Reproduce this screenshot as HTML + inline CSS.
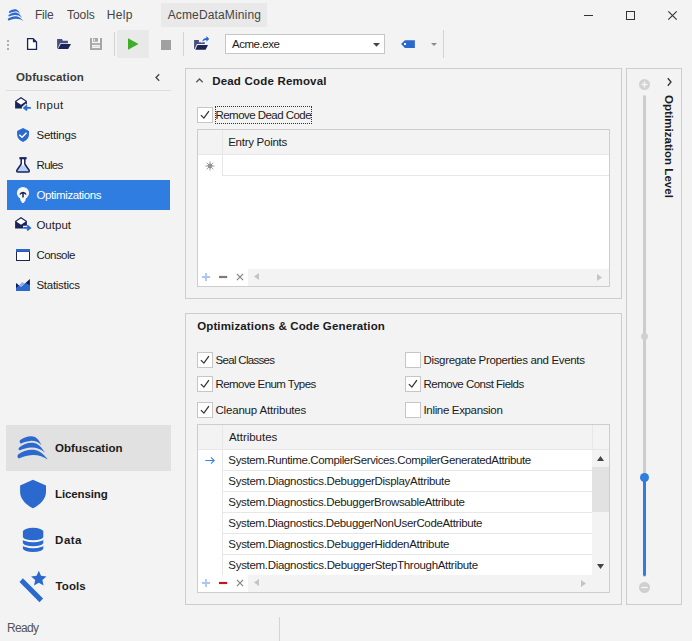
<!DOCTYPE html>
<html><head><meta charset="utf-8">
<style>
*{box-sizing:border-box;margin:0;padding:0}
html,body{width:692px;height:641px;overflow:hidden;background:#f3f3f3}
body{font-family:"Liberation Sans",sans-serif;font-size:11.5px;color:#1b1b1b;position:relative}
.a{position:absolute;white-space:nowrap;line-height:16px}
.b{font-weight:bold}
.box{position:absolute;border:1px solid #cdcdcd}
.cb{position:absolute;width:16px;height:16px;border:1px solid #c6c6c6;background:#fff}
svg{position:absolute;overflow:visible}
.row{position:absolute;left:223px;width:369px;height:20px;background:#fff}
.hl{position:absolute;height:1px;background:#e7e7e7}
.vl{position:absolute;width:1px;background:#e7e7e7}
</style></head><body>

<!-- MENU BAR -->
<div class="a" style="left:161px;top:3px;width:106px;height:24px;background:#e9e9e9"></div>
<!-- window controls -->
<div class="a" style="left:584px;top:15px;width:9px;height:1px;background:#333"></div>
<div class="a" style="left:626px;top:11px;width:9px;height:9px;border:1px solid #333"></div>
<svg style="left:668px;top:11px" width="9" height="9" viewBox="0 0 9 9"><path d="M0.3 0.3L8.7 8.7M8.7 0.3L0.3 8.7" stroke="#333" stroke-width="1.1" fill="none"/></svg>

<!-- TOOLBAR -->
<div class="a" style="left:117px;top:30px;width:32px;height:28px;background:#e9e9e9"></div>
<div class="a" style="left:114px;top:32px;width:1px;height:24px;background:#d4d4d4"></div>
<div class="a" style="left:183px;top:32px;width:1px;height:24px;background:#d4d4d4"></div>
<div class="a" style="left:443px;top:30px;width:1px;height:28px;background:#d4d4d4"></div>
<div class="a" style="left:225px;top:34px;width:160px;height:20px;background:#fff;border:1px solid #c6c6c6"></div>
<!-- grip -->
<div class="a" style="left:7px;top:40px;width:2px;height:2px;background:#adadad"></div>
<div class="a" style="left:7px;top:44px;width:2px;height:2px;background:#adadad"></div>
<div class="a" style="left:7px;top:48px;width:2px;height:2px;background:#adadad"></div>
<!-- stop -->
<div class="a" style="left:161px;top:40px;width:10px;height:10px;background:#a0a0a0"></div>
<!-- play -->
<svg style="left:128px;top:38px" width="11" height="12" viewBox="0 0 11 12"><path d="M0 0.3L10.5 6L0 11.7Z" fill="#3fae2a"/></svg>
<!-- combo arrow -->
<svg style="left:373px;top:43px" width="7" height="4" viewBox="0 0 7 4"><path d="M0 0H7L3.5 3.7Z" fill="#444"/></svg>
<svg style="left:431px;top:43px" width="6" height="3" viewBox="0 0 6 3"><path d="M0 0H6L3 3Z" fill="#8c8c8c"/></svg>

<svg style="left:5.1px;top:4.5px" width="21.63" height="19.57" viewBox="0 0 42 38" fill="#2b69cf"><path d="M8.2 12.1C13 8.6 19 7 23 9C26 10.5 28 14 29.4 17.3C26 13.4 22 12.5 18.2 12.9C14 13.3 11 14.5 9.3 15.4C7.6 15.8 7.2 13 8.2 12.1Z"/><path d="M7.2 19.5C12 15.5 18 13.8 23 15.2C27.5 16.5 30.5 20.5 32.8 24.6C29 21 24 19.5 19.4 19.6C15 19.8 11 21.2 8.1 22.3C6.4 22.6 6.2 20.2 7.2 19.5Z"/><path d="M6.1 26.4C11 22.8 18 20.8 24 22.2C29 23.5 33 27.5 35.8 31.6C31.5 28.3 26 26.7 20.6 26.9C15 27.2 10.5 29 7.5 30.2C5.4 30.6 5 27.5 6.1 26.4Z"/></svg>
<svg style="left:20px;top:32px" width="60" height="24" viewBox="0 0 60 24">
<path d="M7.6 6.6H13.1L16.5 9.9V17.4H7.6Z" fill="#fff" stroke="#1b2459" stroke-width="1.3"/><path d="M12.9 6.2V10.2H16.9Z" fill="#1b2459"/>
<path d="M37.1 6.9H42L42.8 8.7H47.9V11.2H40L37.6 16.5H37.1Z" fill="#474e7e"/>
<path d="M40.7 12.1H51L48.2 16.9H37.9Z" fill="#1b2459"/>
</svg>
<svg style="left:90px;top:38px" width="12" height="12" viewBox="0 0 12 12">
<rect x="0" y="0" width="12" height="12" fill="#a6a6a6"/><rect x="2" y="0" width="8" height="5.2" fill="#f5f5f5"/><rect x="3.2" y="0" width="4.7" height="3.7" fill="#a6a6a6"/><rect x="4.1" y="0.9" width="0.9" height="2.1" fill="#f5f5f5"/><rect x="2" y="6.9" width="8" height="3.2" fill="#f5f5f5"/><rect x="2" y="8.2" width="8" height="0.6" fill="#cfcfcf"/>
</svg>
<svg style="left:188px;top:32px" width="28" height="24" viewBox="0 0 28 24">
<path d="M6.1 8.1H10.9V10.3H16.8V12H9L6.6 17H6.1Z" fill="#474e7e"/>
<path d="M9.5 13H20L17.6 17.7H7.3Z" fill="#1b2459"/>
<path d="M14.2 9.7C14.5 7.2 16.2 6 18.4 5.9V4L21.2 6.9L18.4 9.8V7.9C16.8 7.9 15.6 8.5 14.2 9.7Z" fill="#2468d4" stroke="#f3f3f3" stroke-width="1.2" paint-order="stroke"/>
</svg>
<svg style="left:396px;top:34px" width="24" height="20" viewBox="0 0 24 20">
<path d="M5.1 10L8.9 6.2H18.9V13.9H8.9Z" fill="#2b69cf"/><rect x="8" y="9" width="2" height="2" fill="#f5f5f5"/>
</svg>


<!-- LEFT PANEL -->
<div class="a" style="left:6px;top:90px;width:165px;height:1px;background:#dedede"></div>
<svg style="left:155px;top:74px" width="5" height="7" viewBox="0 0 5 7"><path d="M4.2 0.3L1 3.5L4.2 6.7" stroke="#444" stroke-width="1.3" fill="none"/></svg>
<div class="a" style="left:7px;top:180px;width:163px;height:30px;background:#307de1"></div>

<svg style="left:10px;top:93px" width="26" height="24" viewBox="0 0 26 24"><path d="M5.1 8.1L11 3.9L16.9 8.1V15.6H5.1Z" fill="#1b2459"/><path d="M11 5.5L15.7 8.5L11 11.7L6.3 8.5Z" fill="#fff"/><path d="M21 14.9H14.2M17.2 12.2L14 14.9L17.2 17.6" stroke="#f3f3f3" stroke-width="4.4" fill="none" stroke-linejoin="round"/><path d="M20.8 14.9H14.6M17.1 12.4L14.2 14.9L17.1 17.4" stroke="#2468d4" stroke-width="1.9" fill="none"/></svg>
<svg style="left:10px;top:123px" width="26" height="24" viewBox="0 0 26 24">
<path d="M13 4.9L19 8.1V11.3C19 15 16.5 17.5 13 19C9.5 17.5 7.1 15 7.1 11.3V8.1Z" fill="#2b69cf"/>
<path d="M9.4 11.8L12 14.2L16.5 9.7" stroke="#fff" stroke-width="1.5" fill="none"/>
</svg>
<svg style="left:10px;top:153px" width="26" height="24" viewBox="0 0 26 24">
<path d="M11.2 6V11L6.9 17.2Q6.2 19 8 19H18Q19.8 19 19.1 17.2L14.8 11V6Z" fill="#b9cff5" stroke="#1b2459" stroke-width="1.5" stroke-linejoin="round"/>
<path d="M12 6H14V11.6L14.6 12.5H11.4L12 11.6Z" fill="#fff"/>
<path d="M9.4 5.2H16.6" stroke="#1b2459" stroke-width="2.2"/>
</svg>
<svg style="left:10px;top:183px" width="26" height="24" viewBox="0 0 26 24">
<circle cx="13" cy="10" r="6.1" fill="#f6f6f6"/><path d="M9.8 14.5H16.2L15.3 17.8L13.7 20H12.3L10.7 17.8Z" fill="#f6f6f6"/>
<path d="M10 11.6C10.6 10 11.7 9.5 13 9.5C14.3 9.5 15.4 10 16 11.6M13 9.8V14.4" stroke="#1b2459" stroke-width="1.5" fill="none"/>
</svg>
<svg style="left:10px;top:213px" width="26" height="24" viewBox="0 0 26 24"><path d="M5.1 8.1L11 3.9L16.9 8.1V15.6H5.1Z" fill="#1b2459"/><path d="M11 5.5L15.7 8.5L11 11.7L6.3 8.5Z" fill="#fff"/><path d="M13 14.9H20M17 12.2L20.2 14.9L17 17.6" stroke="#f3f3f3" stroke-width="4.4" fill="none" stroke-linejoin="round"/><path d="M13.2 14.9H19.8M17.1 12.4L20 14.9L17.1 17.4" stroke="#2468d4" stroke-width="1.9" fill="none"/></svg>
<svg style="left:16px;top:249px" width="14" height="12" viewBox="0 0 14 12">
<rect x="0" y="0" width="14" height="12" fill="#1b2459"/><rect x="1" y="3" width="12" height="8" fill="#fff"/><rect x="0" y="0" width="14" height="2.8" fill="#2b69cf"/>
</svg>
<svg style="left:12px;top:275px" width="22" height="20" viewBox="0 0 22 20">
<path d="M4 7.9L9.2 12L17.9 3.9V16H4Z" fill="#111b4e"/>
<path d="M4 13L6.8 10.4L9.2 12L13.7 7.9L18 10.2V16H4Z" fill="#2b69cf"/>
<path d="M6.8 10.4L10.2 7L12.7 8.4L9.2 12Z" fill="#8fb0ea"/>
</svg>


<div class="a" style="left:6px;top:425px;width:165px;height:46px;background:#e1e1e1"></div>

<svg style="left:12px;top:428px" width="42" height="38" viewBox="0 0 42 38" fill="#2b69cf"><path d="M8.2 12.1C13 8.6 19 7 23 9C26 10.5 28 14 29.4 17.3C26 13.4 22 12.5 18.2 12.9C14 13.3 11 14.5 9.3 15.4C7.6 15.8 7.2 13 8.2 12.1Z"/><path d="M7.2 19.5C12 15.5 18 13.8 23 15.2C27.5 16.5 30.5 20.5 32.8 24.6C29 21 24 19.5 19.4 19.6C15 19.8 11 21.2 8.1 22.3C6.4 22.6 6.2 20.2 7.2 19.5Z"/><path d="M6.1 26.4C11 22.8 18 20.8 24 22.2C29 23.5 33 27.5 35.8 31.6C31.5 28.3 26 26.7 20.6 26.9C15 27.2 10.5 29 7.5 30.2C5.4 30.6 5 27.5 6.1 26.4Z"/></svg>
<svg style="left:12px;top:474px" width="42" height="38" viewBox="0 0 42 38">
<path d="M20.9 5.8L34 11.5V18C34 25 28 31 20.9 34.3C14 31 8.1 25 8.1 18V11.5Z" fill="#2b69cf"/>
</svg>
<svg style="left:12px;top:520px" width="42" height="38" viewBox="0 0 42 38">
<path d="M10.9 11.5A10.2 3.7 0 0 1 31.3 11.5V28.3A10.2 3.7 0 0 1 10.9 28.3Z" fill="#2b69cf"/>
<path d="M10.4 17.4A10.2 3.7 0 0 0 31.8 17.4M10.4 23.4A10.2 3.7 0 0 0 31.8 23.4" stroke="#f6f6f6" stroke-width="1.9" fill="none"/>
</svg>
<svg style="left:12px;top:566px" width="42" height="40" viewBox="0 0 42 40">
<path d="M10.9 12.2L7.5 15.9L27.5 36.2L31.1 32.5Z" fill="#2b69cf"/>
<path d="M26.80 4.80L29.03 9.83L34.50 10.40L30.41 14.07L31.56 19.45L26.80 16.70L22.04 19.45L23.19 14.07L19.10 10.40L24.57 9.83Z" fill="#2b69cf"/>
</svg>


<!-- STATUS -->
<div class="a" style="left:279px;top:617px;width:1px;height:24px;background:#d4d4d4"></div>

<!-- PANEL 1 -->
<div class="box" style="left:185px;top:68px;width:437px;height:231px"></div>
<svg style="left:196px;top:78px" width="7" height="5" viewBox="0 0 7 5"><path d="M0.3 4.2L3.5 1L6.7 4.2" stroke="#555" stroke-width="1.3" fill="none"/></svg>
<div class="cb" style="left:197px;top:107px"></div>
<div class="a" style="left:215px;top:106px;width:97px;height:18px;border:1px dotted #333"></div>
<div class="box" style="left:197px;top:129px;width:413px;height:158px;background:#fff"></div>
<div class="a" style="left:198px;top:130px;width:411px;height:24px;background:#f3f3f3"></div>
<div class="hl" style="left:198px;top:154px;width:411px"></div>
<div class="vl" style="left:222px;top:130px;height:46px"></div>
<div class="hl" style="left:222px;top:175px;width:387px"></div>
<div class="a" style="left:248px;top:269px;width:361px;height:17px;background:#f3f3f3"></div>
<svg style="left:198px;top:108px" width="15" height="15" viewBox="0 0 15 15"><path d="M2.9 7.1L5.9 10.1L10.9 3.1" stroke="#333" stroke-width="1.25" fill="none"/></svg>
<svg style="left:201px;top:271.7px" width="50" height="10" viewBox="0 0 50 10">
<path d="M1 5H9M5 1V9" stroke="#a9c6f7" stroke-width="1.8"/>
<path d="M18 5H26.2" stroke="#7a7a7a" stroke-width="2.2"/>
<path d="M35.9 1.9L42.1 8.1M42.1 1.9L35.9 8.1" stroke="#858585" stroke-width="1.25"/>
</svg>
<svg style="left:254px;top:273.2px" width="5" height="7" viewBox="0 0 5 7"><path d="M5 0V7L0 3.5Z" fill="#c4c4c4"/></svg>
<svg style="left:597px;top:273.5px" width="5" height="7" viewBox="0 0 5 7"><path d="M0 0V7L5 3.5Z" fill="#c4c4c4"/></svg><svg style="left:205px;top:160.5px" width="10" height="10" viewBox="0 0 10 10"><circle cx="5" cy="5" r="2.4" fill="#888"/><path d="M5 0.3V9.7M0.3 5H9.7M1.7 1.7L8.3 8.3M8.3 1.7L1.7 8.3" stroke="#999" stroke-width="0.9"/></svg>

<!-- PANEL 2 -->
<div class="box" style="left:185px;top:313px;width:437px;height:292px"></div>
<div class="cb" style="left:197px;top:352px"></div>
<div class="cb" style="left:197px;top:376px"></div>
<div class="cb" style="left:197px;top:402px"></div>
<div class="cb" style="left:405px;top:352px"></div>
<div class="cb" style="left:405px;top:376px"></div>
<div class="cb" style="left:405px;top:402px"></div>

<div class="box" style="left:197px;top:424px;width:413px;height:169px;background:#f3f3f3"></div>
<div class="a" style="left:198px;top:450px;width:394px;height:125px;background:#fff"></div>
<div class="a" style="left:198px;top:575px;width:50px;height:17px;background:#fff"></div>
<div class="hl" style="left:198px;top:449px;width:411px"></div>
<div class="vl" style="left:222px;top:425px;height:150px"></div>
<div class="vl" style="left:592px;top:425px;height:25px"></div>
<div class="hl" style="left:222px;top:470px;width:370px"></div>
<div class="hl" style="left:222px;top:491px;width:370px"></div>
<div class="hl" style="left:222px;top:512px;width:370px"></div>
<div class="hl" style="left:222px;top:533px;width:370px"></div>
<div class="hl" style="left:222px;top:554px;width:370px"></div>
<div class="a" style="left:592px;top:467px;width:17px;height:45px;background:#e2e2e2"></div>
<svg style="left:597px;top:456px" width="7" height="5" viewBox="0 0 7 5"><path d="M0 5H7L3.5 0Z" fill="#444"/></svg>
<svg style="left:597px;top:564px" width="7" height="5" viewBox="0 0 7 5"><path d="M0 0H7L3.5 5Z" fill="#444"/></svg>
<svg style="left:198px;top:353px" width="15" height="15" viewBox="0 0 15 15"><path d="M2.9 7.1L5.9 10.1L10.9 3.1" stroke="#333" stroke-width="1.25" fill="none"/></svg><svg style="left:198px;top:377px" width="15" height="15" viewBox="0 0 15 15"><path d="M2.9 7.1L5.9 10.1L10.9 3.1" stroke="#333" stroke-width="1.25" fill="none"/></svg><svg style="left:198px;top:403px" width="15" height="15" viewBox="0 0 15 15"><path d="M2.9 7.1L5.9 10.1L10.9 3.1" stroke="#333" stroke-width="1.25" fill="none"/></svg><svg style="left:406px;top:377px" width="15" height="15" viewBox="0 0 15 15"><path d="M2.9 7.1L5.9 10.1L10.9 3.1" stroke="#333" stroke-width="1.25" fill="none"/></svg>
<svg style="left:201px;top:577.8px" width="50" height="10" viewBox="0 0 50 10">
<path d="M1 5H9M5 1V9" stroke="#a9c6f7" stroke-width="1.8"/>
<path d="M18 5H26.2" stroke="#c01818" stroke-width="2.2"/>
<path d="M35.9 1.9L42.1 8.1M42.1 1.9L35.9 8.1" stroke="#858585" stroke-width="1.25"/>
</svg>
<svg style="left:254px;top:579.3px" width="5" height="7" viewBox="0 0 5 7"><path d="M5 0V7L0 3.5Z" fill="#c4c4c4"/></svg>
<svg style="left:581px;top:580.3px" width="5" height="7" viewBox="0 0 5 7"><path d="M0 0V7L5 3.5Z" fill="#c4c4c4"/></svg><svg style="left:204.5px;top:457px" width="10" height="7" viewBox="0 0 10 7"><path d="M0.3 3.5H9M6 0.4L9.2 3.5L6 6.6" stroke="#3b82e8" stroke-width="1.1" fill="none"/></svg>

<!-- RIGHT PANEL -->
<div class="box" style="left:626px;top:68px;width:56px;height:537px"></div>
<svg style="left:667px;top:78px" width="5" height="8" viewBox="0 0 5 8"><path d="M0.8 0.3L4 4L0.8 7.7" stroke="#333" stroke-width="1.3" fill="none"/></svg>
<div class="a" style="left:643px;top:95px;width:3px;height:482px;background:#cdcdcd;border-radius:1.5px"></div>
<div class="a" style="left:643px;top:478px;width:3px;height:98px;background:#2f7de1;border-radius:1.5px"></div>
<svg style="left:639px;top:79px" width="11" height="11" viewBox="0 0 11 11"><circle cx="5.5" cy="5.5" r="5.5" fill="#d2d2d2"/><path d="M2.5 5.5H8.5M5.5 2.5V8.5" stroke="#f6f6f6" stroke-width="1.3"/></svg>
<svg style="left:639px;top:582px" width="11" height="11" viewBox="0 0 11 11"><circle cx="5.5" cy="5.5" r="5.5" fill="#cfcfcf"/><path d="M2.2 5.5H8.8" stroke="#f6f6f6" stroke-width="1.3"/></svg>
<svg style="left:640px;top:473px" width="9" height="9" viewBox="0 0 9 9"><circle cx="4.5" cy="4.5" r="4.5" fill="#2f7de1"/></svg>
<svg style="left:641px;top:333px" width="7" height="7" viewBox="0 0 7 7"><circle cx="3.5" cy="3.5" r="3.4" fill="#d0d0d0"/></svg>
<div class="a b" id="ol" style="left:665px;top:94.5px;font-size:11.5px;letter-spacing:0.04px;transform-origin:0 0;transform:rotate(90deg) translate(0,-12px)">Optimization Level</div>

<div class="a t" id="m1" style="left:34.90px;top:7px;font-size:12px;color:#444;letter-spacing:-0.200px">File</div>
<div class="a t" id="m2" style="left:66.90px;top:7px;font-size:12px;color:#444;letter-spacing:-0.012px">Tools</div>
<div class="a t" id="m3" style="left:106.70px;top:7px;font-size:12px;color:#444;letter-spacing:0.317px">Help</div>
<div class="a t" id="m4" style="left:167.70px;top:7px;font-size:12px;color:#444;letter-spacing:0.142px">AcmeDataMining</div>
<div class="a t" id="st" style="left:6.90px;top:620px;font-size:12px;color:#555;letter-spacing:-0.625px">Ready</div>
<div class="a t" id="cmb" style="left:231.95px;top:36px;font-size:11.5px;color:#1b1b1b;letter-spacing:-0.443px">Acme.exe</div>
<div class="a t b" id="lp" style="left:16.05px;top:69px;font-size:11.5px;color:#3c3c3c;letter-spacing:0.070px">Obfuscation</div>
<div class="a t" id="n1" style="left:35.95px;top:97px;font-size:11.5px;color:#1b1b1b;letter-spacing:0.425px">Input</div>
<div class="a t" id="n2" style="left:36.50px;top:127px;font-size:11.5px;color:#1b1b1b;letter-spacing:-0.236px">Settings</div>
<div class="a t" id="n3" style="left:36.50px;top:157px;font-size:11.5px;color:#1b1b1b;letter-spacing:-0.637px">Rules</div>
<div class="a t" id="n4" style="left:36.50px;top:187px;font-size:11.5px;color:#fff;letter-spacing:-0.388px">Optimizations</div>
<div class="a t" id="n5" style="left:36.40px;top:217px;font-size:11.5px;color:#1b1b1b;letter-spacing:0.020px">Output</div>
<div class="a t" id="n6" style="left:36.40px;top:247px;font-size:11.5px;color:#1b1b1b;letter-spacing:-0.533px">Console</div>
<div class="a t" id="n7" style="left:36.40px;top:277px;font-size:11.5px;color:#1b1b1b;letter-spacing:-0.256px">Statistics</div>
<div class="a t b" id="g1" style="left:55.10px;top:440px;font-size:11.5px;color:#1b1b1b;letter-spacing:0.030px">Obfuscation</div>
<div class="a t b" id="g2" style="left:55.10px;top:486px;font-size:11.5px;color:#1b1b1b;letter-spacing:-0.137px">Licensing</div>
<div class="a t b" id="g3" style="left:55.10px;top:532px;font-size:11.5px;color:#1b1b1b;letter-spacing:0.483px">Data</div>
<div class="a t b" id="g4" style="left:55.60px;top:578px;font-size:11.5px;color:#1b1b1b;letter-spacing:0.050px">Tools</div>
<div class="a t b" id="p1t" style="left:212.20px;top:73px;font-size:11.5px;color:#1b1b1b;letter-spacing:0.194px">Dead Code Removal</div>
<div class="a t" id="c0" style="left:215.50px;top:107px;font-size:11.5px;color:#1b1b1b;letter-spacing:-0.540px">Remove Dead Code</div>
<div class="a t" id="ep" style="left:228.20px;top:134px;font-size:11.5px;color:#1b1b1b;letter-spacing:-0.268px">Entry Points</div>
<div class="a t b" id="p2t" style="left:197.15px;top:318px;font-size:11.5px;color:#1b1b1b;letter-spacing:0.145px">Optimizations &amp; Code Generation</div>
<div class="a t" id="c1" style="left:215.50px;top:352px;font-size:11.5px;color:#1b1b1b;letter-spacing:-0.686px">Seal Classes</div>
<div class="a t" id="c2" style="left:215.50px;top:376px;font-size:11.5px;color:#1b1b1b;letter-spacing:-0.562px">Remove Enum Types</div>
<div class="a t" id="c3" style="left:215.50px;top:402px;font-size:11.5px;color:#1b1b1b;letter-spacing:-0.185px">Cleanup Attributes</div>
<div class="a t" id="c4" style="left:423.50px;top:352px;font-size:11.5px;color:#1b1b1b;letter-spacing:-0.340px">Disgregate Properties and Events</div>
<div class="a t" id="c5" style="left:423.50px;top:376px;font-size:11.5px;color:#1b1b1b;letter-spacing:-0.511px">Remove Const Fields</div>
<div class="a t" id="c6" style="left:423.50px;top:402px;font-size:11.5px;color:#1b1b1b;letter-spacing:-0.340px">Inline Expansion</div>
<div class="a t" id="at" style="left:228.90px;top:429px;font-size:11.5px;color:#1b1b1b;letter-spacing:-0.022px">Attributes</div>
<div class="a t" id="r1" style="left:228.35px;top:452px;font-size:11.5px;color:#1b1b1b;letter-spacing:-0.372px">System.Runtime.CompilerServices.CompilerGeneratedAttribute</div>
<div class="a t" id="r2" style="left:228.35px;top:473px;font-size:11.5px;color:#1b1b1b;letter-spacing:-0.314px">System.Diagnostics.DebuggerDisplayAttribute</div>
<div class="a t" id="r3" style="left:228.35px;top:494px;font-size:11.5px;color:#1b1b1b;letter-spacing:-0.332px">System.Diagnostics.DebuggerBrowsableAttribute</div>
<div class="a t" id="r4" style="left:228.35px;top:515px;font-size:11.5px;color:#1b1b1b;letter-spacing:-0.353px">System.Diagnostics.DebuggerNonUserCodeAttribute</div>
<div class="a t" id="r5" style="left:228.35px;top:536px;font-size:11.5px;color:#1b1b1b;letter-spacing:-0.312px">System.Diagnostics.DebuggerHiddenAttribute</div>
<div class="a t" id="r6" style="left:228.35px;top:557px;font-size:11.5px;color:#1b1b1b;letter-spacing:-0.310px">System.Diagnostics.DebuggerStepThroughAttribute</div>
</body></html>
